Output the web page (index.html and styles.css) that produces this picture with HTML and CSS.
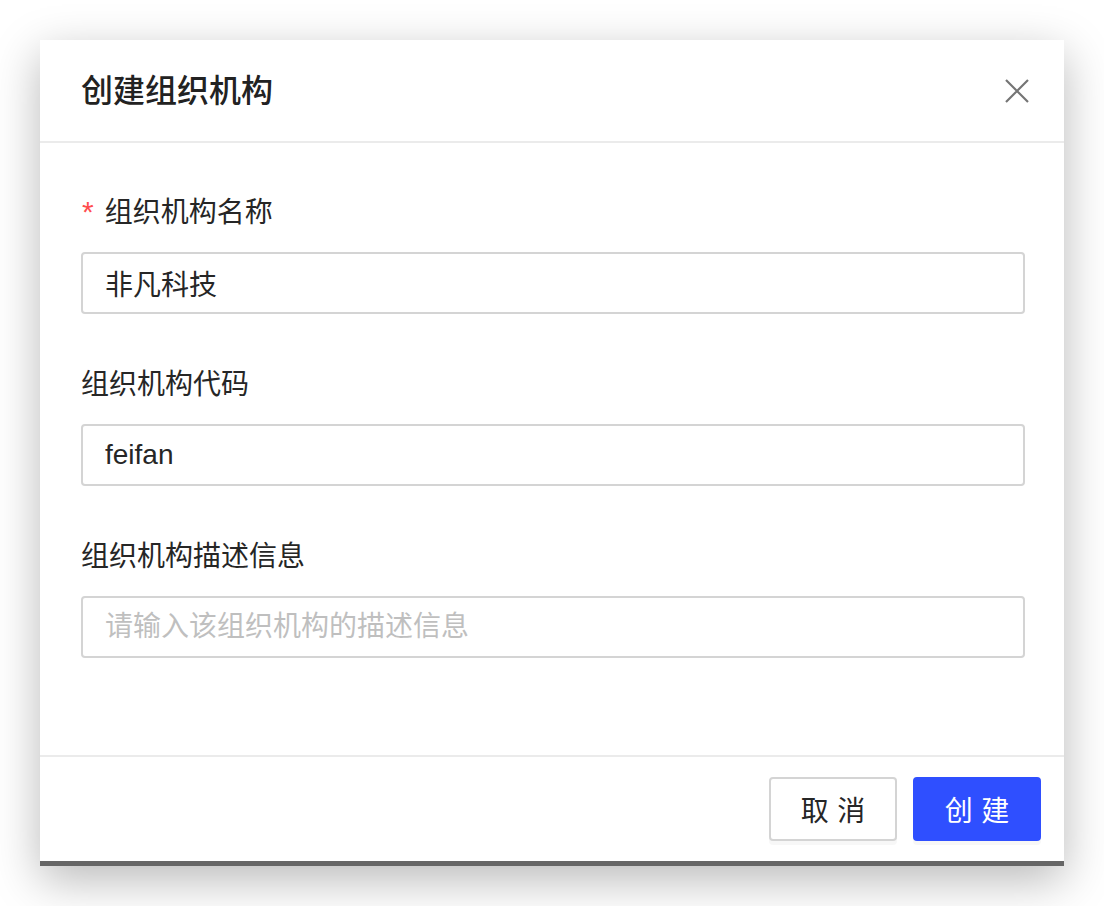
FILE: index.html
```html
<!DOCTYPE html>
<html lang="zh-CN">
<head>
<meta charset="utf-8">
<title>创建组织机构</title>
<link rel="stylesheet" href="styles.css">
</head>
<body>
<div class="modal">
  <div class="modal-header">
    <div class="modal-title">创建组织机构</div>
    <button class="close" aria-label="关闭">
      <svg width="26" height="26" viewBox="0 0 26 26"><path d="M2 2 L24 24 M24 2 L2 24" stroke="#757575" stroke-width="2.2" fill="none"/></svg>
    </button>
  </div>
  <div class="modal-body">
    <div class="field">
      <label class="label"><span class="req">*</span>组织机构名称</label>
      <input class="input" type="text" value="非凡科技">
    </div>
    <div class="field">
      <label class="label">组织机构代码</label>
      <input class="input" type="text" value="feifan">
    </div>
    <div class="field">
      <label class="label">组织机构描述信息</label>
      <input class="input" type="text" placeholder="请输入该组织机构的描述信息">
    </div>
  </div>
  <div class="modal-footer">
    <button class="btn btn-default"><span>取消</span></button>
    <button class="btn btn-primary"><span>创建</span></button>
  </div>
</div>
</body>
</html>
```
FILE: styles.css
```css
html, body {
  margin: 0;
  padding: 0;
  background: #ffffff;
}
body {
  font-family: "Liberation Sans", "Noto Sans CJK SC", sans-serif;
  color: #262626;
  box-sizing: border-box;
  min-height: 906px;
  padding: 40px 0 40px 40px;
}
.modal {
  width: 1024px;
  background: #fff;
  border-bottom: 5px solid #666666;
  box-shadow: 0 14px 44px rgba(0, 0, 0, 0.28);
}
.modal-header {
  height: 101px;
  border-bottom: 2px solid #ebebeb;
  display: flex;
  align-items: center;
  justify-content: space-between;
  padding: 0 34px 0 41px;
}
.modal-title {
  font-size: 32px;
  font-weight: 500;
  color: #222;
  line-height: 44px;
}
.close {
  border: 0;
  background: none;
  padding: 0;
  width: 26px;
  height: 26px;
  display: flex;
  cursor: pointer;
}
.modal-body {
  padding: 50px 39px 97px 41px;
  display: flex;
  flex-direction: column;
  gap: 51px;
}
.field {
  display: flex;
  flex-direction: column;
  gap: 19px;
}
.label {
  font-size: 28px;
  line-height: 40px;
  color: #262626;
  display: flex;
  align-items: center;
}
.req {
  color: #ff4d4f;
  font-size: 30px;
  margin-left: 1px;
  margin-right: 11px;
  position: relative;
  top: -1px;
}
.input {
  box-sizing: border-box;
  width: 944px;
  height: 62px;
  border: 2px solid #d4d4d4;
  border-radius: 4px;
  padding: 0 22px;
  font-family: "Liberation Sans", "Noto Sans CJK SC", sans-serif;
  font-size: 28px;
  color: #262626;
  background: #fff;
  outline: none;
  margin: 0;
}
.input::placeholder {
  color: #bfbfbf;
}
.modal-footer {
  border-top: 2px solid #ebebeb;
  padding: 20px 23px 20px 0;
  display: flex;
  justify-content: flex-end;
  gap: 16px;
}
.btn {
  box-sizing: border-box;
  width: 128px;
  height: 64px;
  border-radius: 4px;
  font-family: "Liberation Sans", "Noto Sans CJK SC", sans-serif;
  font-size: 28px;
  display: flex;
  align-items: center;
  justify-content: center;
  box-shadow: 0 4px 0 rgba(0, 0, 0, 0.03);
  cursor: pointer;
  padding: 0;
}
.btn span {
  letter-spacing: 0.3em;
  margin-right: -0.3em;
}
.btn-default {
  background: #fff;
  border: 2px solid #d4d4d4;
  color: #262626;
}
.btn-primary {
  background: #2f4fff;
  border: 2px solid #2f4fff;
  color: #fff;
}
```
